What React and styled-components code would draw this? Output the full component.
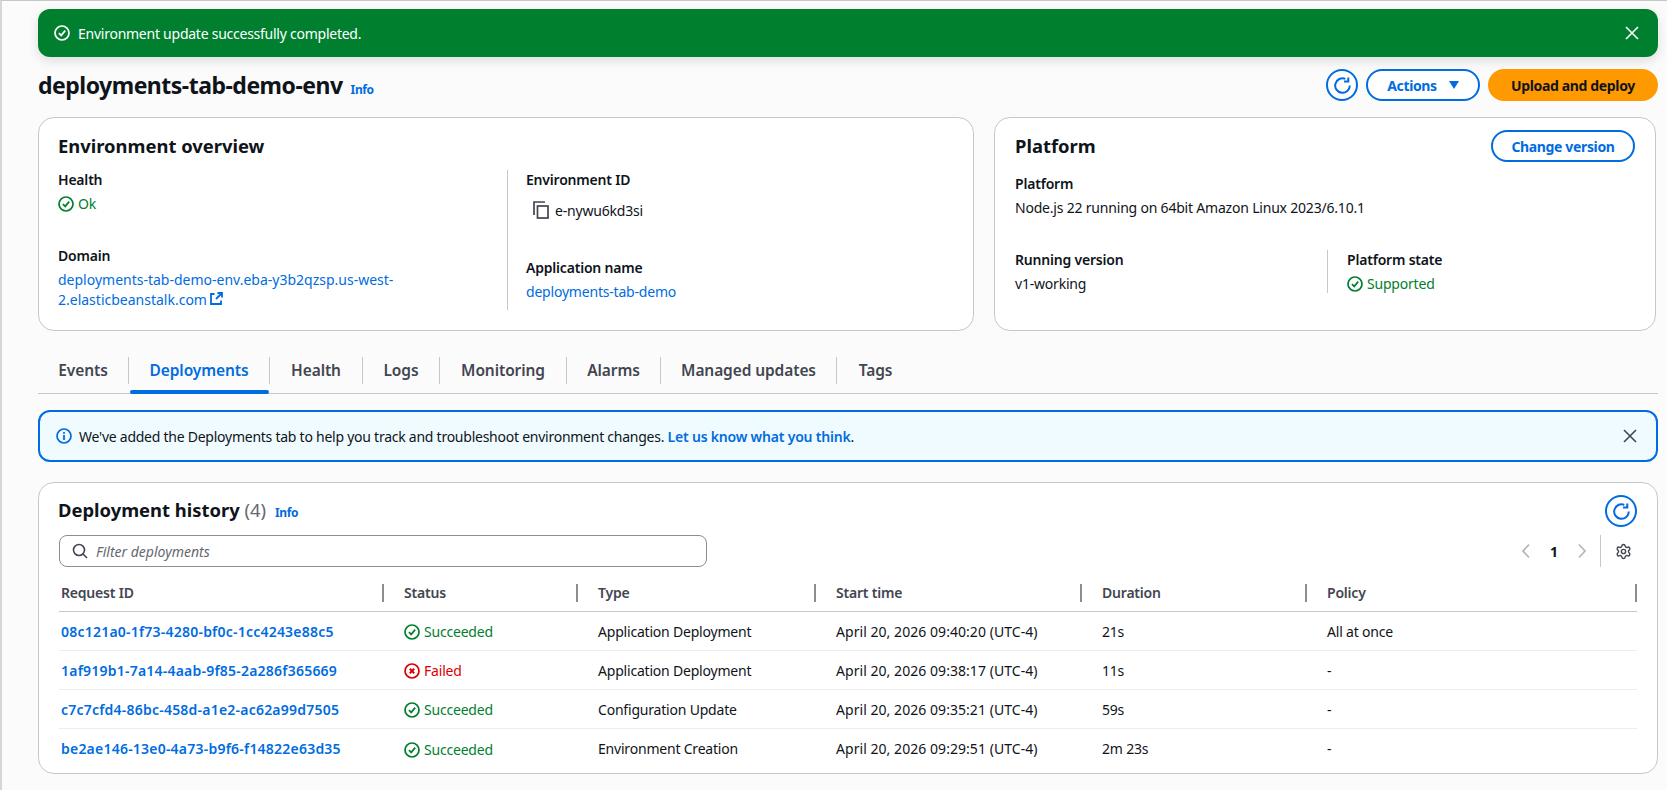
import React from "react";
import styled, { createGlobalStyle } from "styled-components";
import { Settings } from "lucide-react";

const GlobalStyle = createGlobalStyle`
  html, body {
    margin: 0;
    padding: 0;
    background: #fbfbfb;
  }
  body {
    font-family: "Noto Sans", "Open Sans", Arial, sans-serif;
    font-size: 14px;
    letter-spacing: -0.2px;
    color: #0f141a;
  }
  * { box-sizing: border-box; }
`;

const BLUE = "#006ce0";
const GREEN = "#00802f";

const CheckCircle = ({ color = GREEN, size = 16 }) => (
  <svg width={size} height={size} viewBox="0 0 16 16" fill="none" stroke={color} strokeWidth="1.7">
    <circle cx="8" cy="8" r="7" />
    <path d="M4.9 8.1 7.2 10.4 11.2 5.6" />
  </svg>
);

const CrossCircle = () => (
  <svg width="16" height="16" viewBox="0 0 16 16" fill="none" stroke="#db0000" strokeWidth="1.7">
    <circle cx="8" cy="8" r="7" />
    <path d="M5.8 5.8 10.2 10.2M10.2 5.8 5.8 10.2" strokeWidth="2" />
  </svg>
);

const CloseIcon = ({ color }) => (
  <svg width="16" height="16" viewBox="0 0 16 16" fill="none" stroke={color} strokeWidth="1.6">
    <path d="M2 2 14 14M14 2 2 14" />
  </svg>
);

const RefreshIcon = () => (
  <svg width="17" height="17" viewBox="0 0 17 17" fill="none" stroke={BLUE} strokeWidth="2">
    <path d="M15.8 8.500A7.300 7.300 0 1 1 11.300 1.800" />
    <path d="M14.300 .5V4.600H10" />
  </svg>
);

const InfoCircle = () => (
  <svg width="16" height="16" viewBox="0 0 16 16" fill="none" stroke={BLUE} strokeWidth="1.7">
    <circle cx="8" cy="8" r="7" />
    <path d="M8 7V12" strokeWidth="1.8" />
    <path d="M8 4V5.800" strokeWidth="1.8" />
  </svg>
);

const CopyIcon = () => (
  <svg width="16" height="18" viewBox="0 0 16 18" fill="none" stroke="#424650" strokeWidth="1.7">
    <path d="M1 14V1H12" />
    <rect x="4.500" y="5" width="10.500" height="12" />
  </svg>
);

const ExternalIcon = () => (
  <svg width="13" height="13" viewBox="0 0 13 13" fill="none" stroke={BLUE} strokeWidth="1.8">
    <path d="M4.500 2H1V12H11V8.500" />
    <path d="M6 7 12 1M7.500 1H12V5.500" />
  </svg>
);

const SearchIcon = () => (
  <svg width="16" height="16" viewBox="0 0 16 16" fill="none" stroke="#424650" strokeWidth="1.6">
    <circle cx="7" cy="7" r="5.500" />
    <path d="M11 11 15 15" />
  </svg>
);

const Chevron = ({ flip }) => (
  <svg width="12" height="16" viewBox="0 0 12 16" fill="none" stroke="#b4b4bb" strokeWidth="1.7">
    <path d={flip ? "M3 1.500 9 8 3 14.500" : "M9 1.500 3 8 9 14.500"} />
  </svg>
);

const Page = styled.div`
  width: 1667px;
  height: 790px;
  overflow: hidden;
  border-top: 1px solid #c6c6cd;
  border-left: 2px solid #d5d5da;
  padding: 8px 9px 0 36px;
  display: flex;
  flex-direction: column;
`;

const SuccessBanner = styled.div`
  height: 48px;
  flex: none;
  background: ${GREEN};
  border-radius: 12px;
  color: #fff;
  display: flex;
  align-items: center;
  padding: 0 18px 0 16px;
  gap: 8px;
  box-shadow: 0 4px 12px rgba(0, 7, 22, 0.12);
`;

const BannerText = styled.span`
  flex: 1;
  letter-spacing: -0.25px;
`;

const HeaderRow = styled.div`
  display: flex;
  align-items: flex-start;
  justify-content: space-between;
  margin-top: 12px;
  height: 48px;
  flex: none;
`;

const TitleWrap = styled.div`
  display: flex;
  align-items: baseline;
  gap: 8px;
  margin-top: -2px;
`;

const PageTitle = styled.h1`
  margin: 0;
  font-size: 23px;
  font-weight: 700;
  line-height: 36px;
  letter-spacing: -0.5px;
`;

const InfoLink = styled.a`
  color: ${BLUE};
  font-size: 12px;
  font-weight: 700;
  letter-spacing: -0.4px;
`;

const Actions = styled.div`
  display: flex;
  align-items: center;
  gap: 8px;
`;

const Button = styled.button`
  height: 32px;
  border-radius: 20px;
  border: 2px solid ${(p) => (p.$primary ? "#ff9900" : BLUE)};
  background: ${(p) => (p.$primary ? "#ff9900" : "#fff")};
  color: ${(p) => (p.$primary ? "#0f141a" : BLUE)};
  font-family: inherit;
  font-size: 14px;
  font-weight: 700;
  letter-spacing: -0.35px;
  display: inline-flex;
  align-items: center;
  justify-content: center;
  gap: 12px;
  padding: 0;
  width: ${(p) => p.$width}px;
  flex: none;
`;

const Caret = styled.span`
  width: 0;
  height: 0;
  border-left: 5px solid transparent;
  border-right: 5px solid transparent;
  border-top: 8px solid ${BLUE};
`;

const TopCards = styled.div`
  display: grid;
  grid-template-columns: 936px 662px;
  column-gap: 20px;
  height: 214px;
  flex: none;
`;

const Card = styled.section`
  background: #fff;
  border: 1px solid #c6c6cd;
  border-radius: 16px;
  padding: 0 ${(p) => p.$inset || 20}px;
`;

const CardHead = styled.div`
  height: 52px;
  padding-top: 12px;
  display: flex;
  justify-content: space-between;
  align-items: flex-start;
`;

const CardTitle = styled.h2`
  margin: 4px 0 0;
  font-size: 18.400px;
  font-weight: 700;
  line-height: 24px;
  letter-spacing: 0;
`;

const OverviewGrid = styled.div`
  display: grid;
  grid-template-columns: 449px 1fr;
`;

const OverviewCol = styled.div`
  padding-left: ${(p) => (p.$divided ? "18px" : "0")};
  border-left: ${(p) => (p.$divided ? "1px solid #c6c6cd" : "none")};
  display: flex;
  flex-direction: column;
  height: 140px;
`;

const Label = styled.div`
  font-weight: 600;
  line-height: 20px;
  margin-top: ${(p) => p.$top || 0}px;
`;

const Value = styled.div`
  line-height: 20px;
  margin-top: 4px;
`;

const Link = styled.a`
  color: ${BLUE};
  font-weight: ${(p) => (p.$bold ? 600 : 400)};
  letter-spacing: ${(p) => p.$spacing ?? -0.2}px;
`;

const Status = styled.div`
  display: flex;
  align-items: center;
  gap: 4px;
  line-height: 20px;
  color: ${(p) => p.$color || GREEN};
  margin-top: ${(p) => p.$top || 0}px;
`;

const CopyRow = styled.div`
  display: flex;
  align-items: center;
  gap: 6px;
  margin: 10px 0 0 7px;
  height: 20px;
`;

const PlatformRow = styled.div`
  display: grid;
  grid-template-columns: 312px 1fr;
  margin-top: 32px;
`;

const PlatformCol = styled.div`
  padding-left: ${(p) => (p.$divided ? "19px" : "0")};
  border-left: ${(p) => (p.$divided ? "1px solid #c6c6cd" : "none")};
  height: 43px;
`;

const Tabs = styled.nav`
  display: flex;
  align-items: flex-start;
  height: 38px;
  margin-top: 25px;
  border-bottom: 1px solid #c6c6cd;
  flex: none;
`;

const Tab = styled.div`
  position: relative;
  height: 37px;
  flex: none;
  width: ${(p) => p.$width}px;
  padding-top: 1px;
  display: flex;
  justify-content: center;
`;

const TabLabel = styled.span`
  width: 100%;
  height: 27px;
  text-align: center;
  line-height: 27px;
  font-size: 15.500px;
  font-weight: 600;
  letter-spacing: -0.1px;
  color: ${(p) => (p.$active ? BLUE : "#424650")};
  border-right: ${(p) => (p.$last ? "none" : "1px solid #c6c6cd")};
`;

const TabUnderline = styled.span`
  position: absolute;
  left: 1px;
  right: 1px;
  bottom: -1px;
  height: 4px;
  border-radius: 2px;
  background: ${BLUE};
`;

const InfoFlash = styled.div`
  margin-top: 16px;
  height: 52px;
  flex: none;
  background: #f0fbff;
  border: 2px solid ${BLUE};
  border-radius: 12px;
  display: flex;
  align-items: center;
  gap: 7px;
  padding: 0 18px 0 16px;
`;

const HistoryCard = styled(Card)`
  margin-top: 20px;
  height: 292px;
  flex: none;
`;

const HistoryHead = styled.div`
  display: flex;
  justify-content: space-between;
  align-items: flex-start;
  height: 52px;
  padding-top: 12px;
`;

const HistoryTitle = styled.div`
  display: flex;
  align-items: baseline;
  gap: 9px;
  margin: -1px 0 0 -1px;
`;

const Count = styled.span`
  font-weight: 400;
  color: #656871;
`;

const IconButton = styled.button`
  width: 32px;
  height: 32px;
  border-radius: 50%;
  border: 2px solid ${BLUE};
  background: #fff;
  padding: 0;
  display: inline-flex;
  align-items: center;
  justify-content: center;
  flex: none;
`;

const FilterRow = styled.div`
  display: flex;
  justify-content: space-between;
  align-items: center;
  height: 32px;
`;

const FilterBox = styled.div`
  width: 648px;
  height: 32px;
  border: 1px solid #8c8c94;
  border-radius: 8px;
  background: #fff;
  display: flex;
  align-items: center;
  gap: 8px;
  padding-left: 12px;
`;

const Placeholder = styled.span`
  font-style: italic;
  font-size: 14px;
  letter-spacing: 0;
  color: #656871;
`;

const Pager = styled.div`
  display: flex;
  align-items: center;
  height: 32px;
  margin-right: 5px;
  color: #424650;
`;

const PageNum = styled.span`
  font-weight: 700;
  width: 44px;
  text-align: center;
  color: #0f141a;
`;

const PagerDivider = styled.span`
  width: 1px;
  height: 32px;
  background: #c6c6cd;
  margin: 0 14px 0 12px;
`;

const Columns = "325px 194px 238px 266px 225px 330px";

const HeadRow = styled.div`
  display: grid;
  grid-template-columns: ${Columns};
  height: 37px;
  align-items: center;
  margin-top: 8px;
  border-bottom: 1px solid #c6c6cd;
`;

const HeadCell = styled.div`
  display: flex;
  justify-content: space-between;
  align-items: center;
  font-weight: 600;
  color: #424650;
  padding-left: ${(p) => (p.$first ? 2 : 20)}px;
`;

const HeadLabel = styled.span`
  margin-top: -2px;
`;

const Resizer = styled.span`
  width: 2px;
  height: 18px;
  background: #8c8c94;
`;

const Row = styled.div`
  display: grid;
  grid-template-columns: ${Columns};
  height: 39px;
  align-items: center;
  border-bottom: ${(p) => (p.$last ? "none" : "1px solid #ebebf0")};
`;

const Cell = styled.div`
  padding-left: ${(p) => (p.$first ? 2 : 20)}px;
  letter-spacing: ${(p) => p.$spacing ?? -0.2}px;
`;

const StatusCell = styled(Cell)`
  padding-top: 2px;
`;

const rows = [
  ["08c121a0-1f73-4280-bf0c-1cc4243e88c5", true, "Application Deployment", "April 20, 2026 09:40:20 (UTC-4)", "21s", "All at once"],
  ["1af919b1-7a14-4aab-9f85-2a286f365669", false, "Application Deployment", "April 20, 2026 09:38:17 (UTC-4)", "11s", "-"],
  ["c7c7cfd4-86bc-458d-a1e2-ac62a99d7505", true, "Configuration Update", "April 20, 2026 09:35:21 (UTC-4)", "59s", "-"],
  ["be2ae146-13e0-4a73-b9f6-f14822e63d35", true, "Environment Creation", "April 20, 2026 09:29:51 (UTC-4)", "2m 23s", "-"],
];

const tabs = [
  ["Events", 91],
  ["Deployments", 141],
  ["Health", 93],
  ["Logs", 77],
  ["Monitoring", 127],
  ["Alarms", 94],
  ["Managed updates", 176],
  ["Tags", 77],
];

const heads = ["Request ID", "Status", "Type", "Start time", "Duration", "Policy"];

export default function App() {
  return (
    <>
      <GlobalStyle />
      <Page>
        <SuccessBanner>
          <CheckCircle color="#fff" />
          <BannerText>Environment update successfully completed.</BannerText>
          <CloseIcon color="#fff" />
        </SuccessBanner>

        <HeaderRow>
          <TitleWrap>
            <PageTitle>deployments-tab-demo-env</PageTitle>
            <InfoLink>Info</InfoLink>
          </TitleWrap>
          <Actions>
            <IconButton><RefreshIcon /></IconButton>
            <Button $width={114}>Actions <Caret /></Button>
            <Button $primary $width={170}>Upload and deploy</Button>
          </Actions>
        </HeaderRow>

        <TopCards>
          <Card $inset={19}>
            <CardHead>
              <CardTitle>Environment overview</CardTitle>
            </CardHead>
            <OverviewGrid>
              <OverviewCol>
                <Label>Health</Label>
                <Status $top={4}><CheckCircle />Ok</Status>
                <Label $top={32}>Domain</Label>
                <Value>
                  <Link $spacing={0}>deployments-tab-demo-env.eba-y3b2qzsp.us-west-<br />2.elasticbeanstalk.com</Link>{" "}
                  <ExternalIcon />
                </Value>
              </OverviewCol>
              <OverviewCol $divided>
                <Label>Environment ID</Label>
                <CopyRow><CopyIcon />e-nywu6kd3si</CopyRow>
                <Label $top={38}>Application name</Label>
                <Value><Link>deployments-tab-demo</Link></Value>
              </OverviewCol>
            </OverviewGrid>
          </Card>
          <Card>
            <CardHead>
              <CardTitle>Platform</CardTitle>
              <Button $width={144}>Change version</Button>
            </CardHead>
            <Label $top={4}>Platform</Label>
            <Value>Node.js 22 running on 64bit Amazon Linux 2023/6.10.1</Value>
            <PlatformRow>
              <PlatformCol>
                <Label>Running version</Label>
                <Value>v1-working</Value>
              </PlatformCol>
              <PlatformCol $divided>
                <Label>Platform state</Label>
                <Status $top={4}><CheckCircle />Supported</Status>
              </PlatformCol>
            </PlatformRow>
          </Card>
        </TopCards>

        <Tabs>
          {tabs.map(([name, width], i) => (
            <Tab key={name} $width={width}>
              <TabLabel $active={name === "Deployments"} $last={i === tabs.length - 1}>{name}</TabLabel>
              {name === "Deployments" && <TabUnderline />}
            </Tab>
          ))}
        </Tabs>

        <InfoFlash>
          <InfoCircle />
          <BannerText>
            We've added the Deployments tab to help you track and troubleshoot environment changes.{" "}
            <Link $bold $spacing={-0.2}>Let us know what you think</Link>.
          </BannerText>
          <CloseIcon color="#424650" />
        </InfoFlash>

        <HistoryCard>
          <HistoryHead>
            <HistoryTitle>
              <CardTitle>Deployment history <Count>(4)</Count></CardTitle>
              <InfoLink>Info</InfoLink>
            </HistoryTitle>
            <IconButton><RefreshIcon /></IconButton>
          </HistoryHead>
          <FilterRow>
            <FilterBox>
              <SearchIcon />
              <Placeholder>Filter deployments</Placeholder>
            </FilterBox>
            <Pager>
              <Chevron />
              <PageNum>1</PageNum>
              <Chevron flip />
              <PagerDivider />
              <Settings size={17} strokeWidth={2} />
            </Pager>
          </FilterRow>
          <HeadRow>
            {heads.map((h, i) => (
              <HeadCell key={h} $first={i === 0}><HeadLabel>{h}</HeadLabel><Resizer /></HeadCell>
            ))}
          </HeadRow>
          {rows.map(([id, ok, type, start, duration, policy], i) => (
            <Row key={id} $last={i === rows.length - 1}>
              <Cell $first><Link $bold $spacing={0.22}>{id}</Link></Cell>
              <StatusCell>
                {ok ? (
                  <Status><CheckCircle />Succeeded</Status>
                ) : (
                  <Status $color="#db0000"><CrossCircle />Failed</Status>
                )}
              </StatusCell>
              <Cell>{type}</Cell>
              <Cell $spacing={0.05}>{start}</Cell>
              <Cell>{duration}</Cell>
              <Cell>{policy}</Cell>
            </Row>
          ))}
        </HistoryCard>
      </Page>
    </>
  );
}
